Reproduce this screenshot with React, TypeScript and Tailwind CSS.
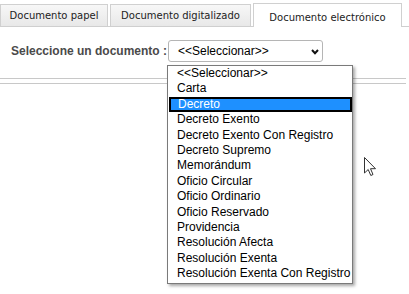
import React from "react";

const items = [
  "<<Seleccionar>>",
  "Carta",
  "Decreto",
  "Decreto Exento",
  "Decreto Exento Con Registro",
  "Decreto Supremo",
  "Memorándum",
  "Oficio Circular",
  "Oficio Ordinario",
  "Oficio Reservado",
  "Providencia",
  "Resolución Afecta",
  "Resolución Exenta",
  "Resolución Exenta Con Registro",
];

export default function App() {
  return (
    <div className="relative w-[409px] h-[294px] bg-white overflow-hidden">
      {/* Tabs */}
      <div className="flex items-end h-[27px] border-b border-[#cfcfcf] font-['DejaVu_Sans',sans-serif] text-[10px] text-[#222]">
        <div className="w-[108px] h-[22px] flex items-center justify-center border border-b-0 border-[#d0d0d0] bg-gradient-to-b from-[#f7f7f7] to-[#e8e8e8]">
          Documento papel
        </div>
        <div className="ml-[2px] w-[141px] h-[22px] flex items-center justify-center border border-b-0 border-[#d0d0d0] bg-gradient-to-b from-[#f7f7f7] to-[#e8e8e8]">
          Documento digitalizado
        </div>
        <div className="ml-[2px] w-[149px] h-[24px] -mb-px pt-[3px] flex items-center justify-center border border-b-0 border-[#d0d0d0] bg-white">
          Documento electrónico
        </div>
      </div>

      {/* Select row */}
      <div className="flex items-center mt-[13px] h-[22px] pl-[11px] font-['Liberation_Sans',Arial,sans-serif]">
        <span className="w-[157px] text-[12px] font-bold text-[#4a4a4a]">Seleccione un documento :</span>
        <div className="relative w-[155px] h-[22px] border border-[#b5b5b5] rounded-[3px] bg-white flex items-center pl-[9px] text-[12px] text-black">
          <span>&lt;&lt;Seleccionar&gt;&gt;</span>
          <svg className="absolute left-[142px] top-[8px]" width="8" height="6" viewBox="0 0 8 6">
            <path d="M1 1 L4 4.2 L7 1" fill="none" stroke="#111" strokeWidth="2" />
          </svg>
        </div>
      </div>

      {/* Lines */}
      <div className="mt-[16px] w-[406px] h-px bg-[#c8c8c8]" />
      <div className="mt-[4px] w-[406px] h-px bg-[#c8c8c8]" />

      {/* Dropdown list */}
      <div className="absolute left-[167px] top-[65px] w-[186px] h-[219px] border border-[#7a7a7a] bg-white shadow-[2px_2px_3px_rgba(0,0,0,0.35)] font-['Liberation_Sans',Arial,sans-serif] text-[12px] text-black">
        {items.map((it) =>
          it === "Decreto" ? (
            <div
              key={it}
              className="h-[15.4px] leading-[11.4px] ml-[1px] pl-[7px] bg-[#1e90ff] border-2 border-black text-white whitespace-nowrap"
            >
              {it}
            </div>
          ) : (
            <div key={it} className="h-[15.4px] leading-[15.4px] pl-[9px] whitespace-nowrap">
              {it}
            </div>
          )
        )}
      </div>

      {/* Cursor */}
      <svg className="absolute left-[364px] top-[157px]" width="13" height="20" viewBox="0 0 13 20">
        <path
          d="M0.5 0.5 L0.5 16 L4.2 12.5 L6.8 18.5 L9 17.5 L6.5 11.7 L11.5 11.7 Z"
          fill="#fff"
          stroke="#333"
          strokeWidth="1"
          strokeLinejoin="miter"
        />
      </svg>
    </div>
  );
}
